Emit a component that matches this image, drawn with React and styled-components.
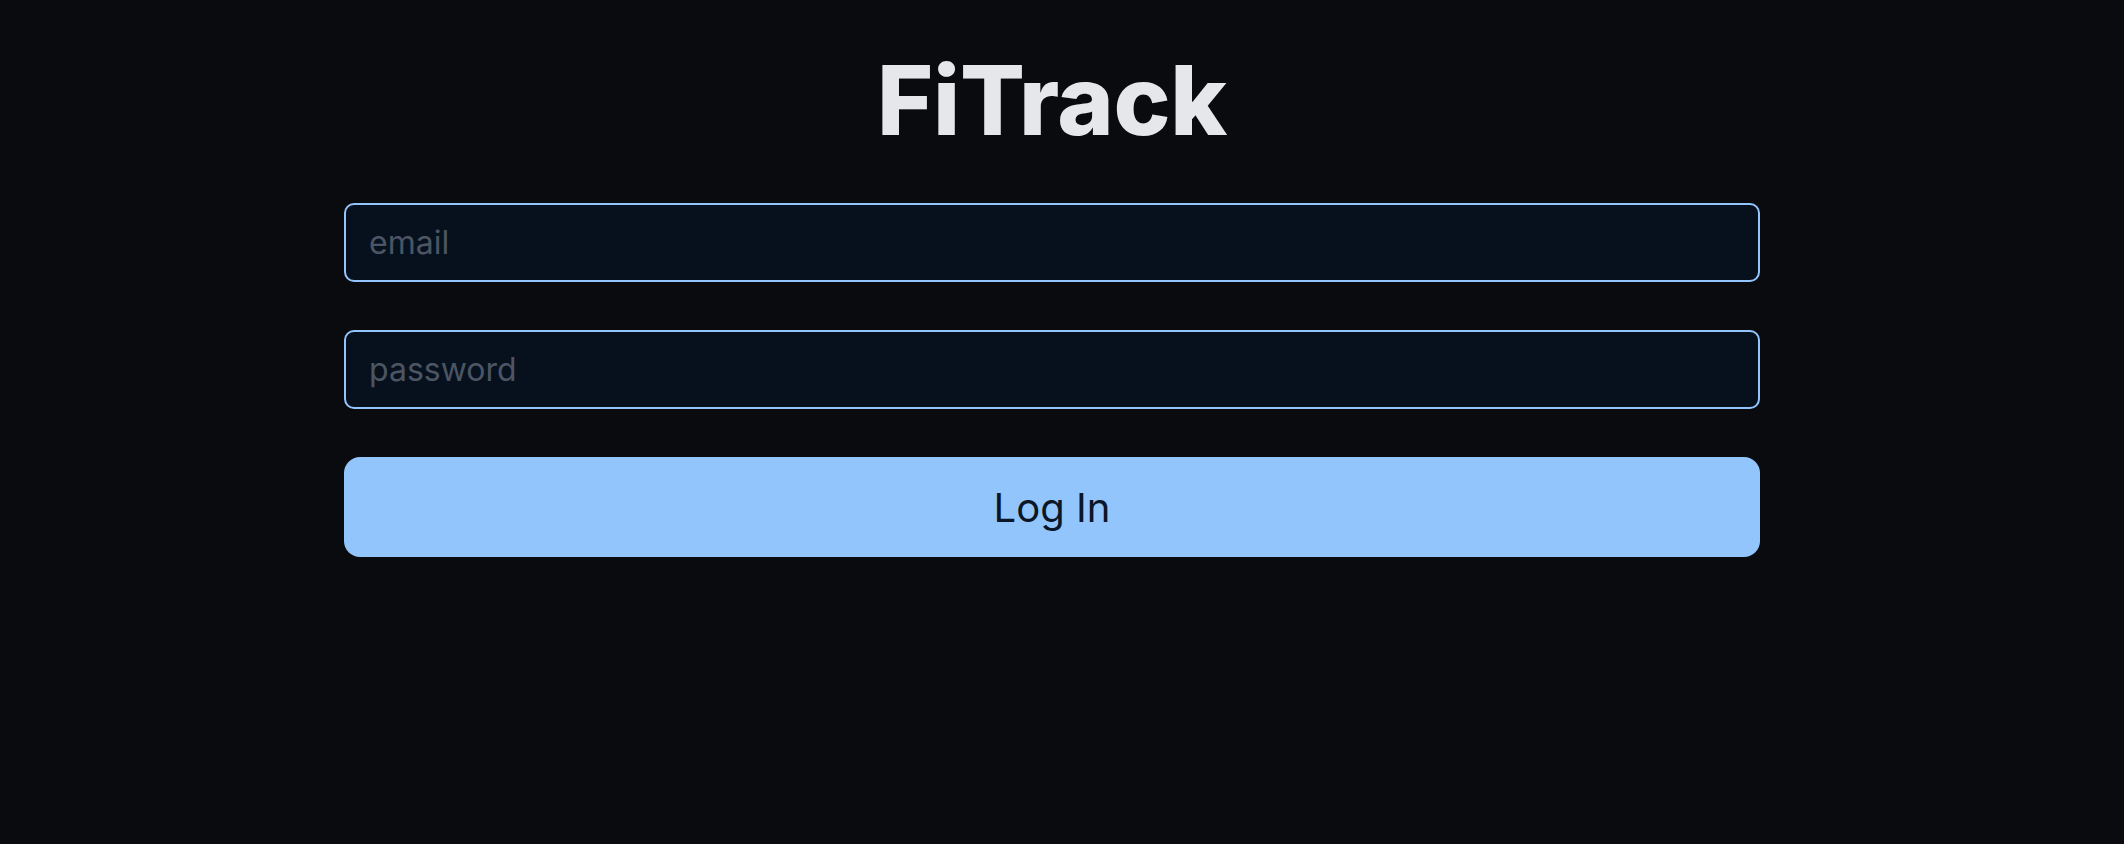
import React from "react";
import styled, { createGlobalStyle } from "styled-components";

const GlobalStyle = createGlobalStyle`
	html, body {
		margin: 0;
		padding: 0;
		background: #0a0b0f;
	}
	body {
		font-family: Inter, "Liberation Sans", sans-serif;
		min-height: 100vh;
	}
`;

const Page = styled.div`
	min-height: 100vh;
	display: flex;
	justify-content: center;
	padding: 52px 20px 0 0;
	box-sizing: border-box;
`;

const Column = styled.form`
	width: 1416px;
	display: flex;
	flex-direction: column;
	align-items: stretch;
`;

const Title = styled.h1`
	margin: 0 0 55px;
	text-align: center;
	font-size: 96px;
	line-height: 1;
	font-weight: 800;
	letter-spacing: -0.3px;
	color: #e5e7eb;
`;

const Field = styled.input`
	height: 79px;
	box-sizing: border-box;
	margin-bottom: 48px;
	padding: 0 23px;
	border: 2px solid #93c5fd;
	border-radius: 10px;
	background: #07111e;
	color: #e5e7eb;
	font-family: Inter, "Liberation Sans", sans-serif;
	font-size: 32px;

	&::placeholder {
		color: #4b5563;
	}
	&:focus {
		outline: none;
	}
`;

const Button = styled.button`
	height: 100px;
	border: none;
	border-radius: 16px;
	background: #93c5fd;
	color: #0b1626;
	font-family: Inter, "Liberation Sans", sans-serif;
	font-size: 40px;
	font-weight: 400;
	cursor: pointer;
`;

export default function App() {
	return (
		<>
			<GlobalStyle />
			<Page>
				<Column onSubmit={(e) => e.preventDefault()}>
					<Title>FiTrack</Title>
					<Field type="email" placeholder="email" />
					<Field type="password" placeholder="password" />
					<Button type="submit">Log In</Button>
				</Column>
			</Page>
		</>
	);
}
